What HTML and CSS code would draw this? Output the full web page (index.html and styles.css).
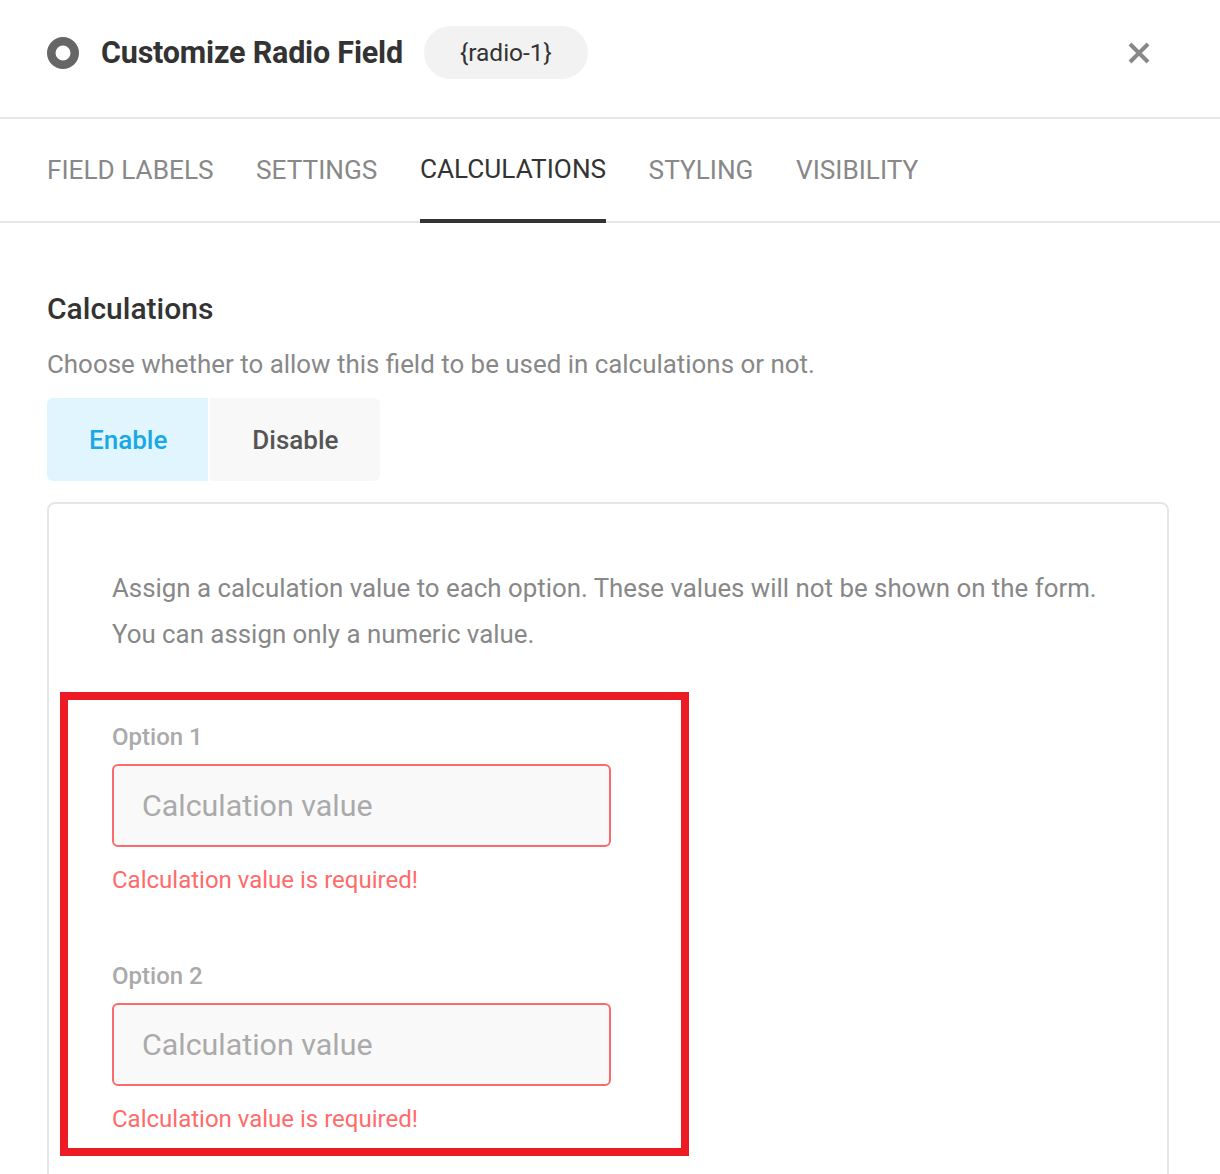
FILE: index.html
```html
<!DOCTYPE html>
<html lang="en">
<head>
<meta charset="utf-8">
<title>Customize Radio Field</title>
<link rel="stylesheet" href="styles.css">
</head>
<body>
<div class="modal">
  <header class="header">
    <svg class="radio-icon" width="32" height="32" viewBox="0 0 32 32" aria-hidden="true">
      <circle cx="16" cy="16" r="11.75" fill="none" stroke="#666" stroke-width="8.5"/>
    </svg>
    <h1 class="title">Customize Radio Field</h1>
    <span class="pill">{radio-1}</span>
    <button class="close" aria-label="Close">
      <svg width="24" height="24" viewBox="0 0 24 24" aria-hidden="true">
        <path d="M3 3 L21 21 M21 3 L3 21" stroke="#888" stroke-width="4" stroke-linecap="butt" fill="none"/>
      </svg>
    </button>
  </header>

  <nav class="tabs">
    <span class="tab">Field Labels</span>
    <span class="tab">Settings</span>
    <span class="tab active">Calculations</span>
    <span class="tab">Styling</span>
    <span class="tab">Visibility</span>
  </nav>

  <main class="content">
    <h2 class="section-title">Calculations</h2>
    <p class="section-desc">Choose whether to allow this field to be used in calculations or not.</p>
    <div class="toggle">
      <span class="toggle-btn on">Enable</span>
      <span class="toggle-btn off">Disable</span>
    </div>

    <div class="box">
      <p class="box-text">Assign a calculation value to each option. These values will not be shown on the form.<br>You can assign only a numeric value.</p>

      <div class="options">
        <div class="option">
          <label class="opt-label">Option 1</label>
          <input class="opt-input" type="text" placeholder="Calculation value">
          <div class="opt-error">Calculation value is required!</div>
        </div>
        <div class="option">
          <label class="opt-label">Option 2</label>
          <input class="opt-input" type="text" placeholder="Calculation value">
          <div class="opt-error">Calculation value is required!</div>
        </div>
      </div>
    </div>
  </main>
</div>
</body>
</html>
```

FILE: styles.css
```css
* { box-sizing: border-box; }

html, body {
  margin: 0;
  padding: 0;
  background: #fff;
}

body {
  font-family: Roboto, "Liberation Sans", Arial, sans-serif;
  color: #333;
  width: 1220px;
  height: 1174px;
  overflow: hidden;
}

.header {
  display: flex;
  align-items: center;
  height: 119px;
  padding: 0 69px 12px 47px;
  border-bottom: 2px solid #e6e6e6;
}

.radio-icon {
  flex: none;
  display: block;
}

.title {
  margin: 0 0 0 22px;
  font-size: 30.5px;
  font-weight: 700;
  color: #333;
  letter-spacing: -0.2px;
}

.pill {
  margin-left: 21px;
  height: 53px;
  line-height: 53px;
  padding: 0 36px;
  border-radius: 27px;
  background: #f2f2f2;
  font-size: 24.5px;
  color: #333;
}

.close {
  margin-left: auto;
  border: 0;
  background: none;
  padding: 0;
  display: flex;
}

.tabs {
  display: flex;
  gap: 42.5px;
  height: 104px;
  padding: 0 47px;
  border-bottom: 2px solid #e6e6e6;
}

.tab {
  display: flex;
  align-items: center;
  font-size: 26.2px;
  color: #888;
  text-transform: uppercase;
}

.tab.active {
  color: #333;
  border-bottom: 4px solid #333;
  margin-bottom: -2px;
}

.content {
  padding: 0 51px 0 47px;
}

.section-title {
  margin: 68px 0 0;
  font-size: 30px;
  line-height: 36px;
  font-weight: 500;
  color: #333;
}

.section-desc {
  margin: 19px 0 0;
  font-size: 25.9px;
  line-height: 36px;
  color: #888;
}

.toggle {
  display: flex;
  gap: 2px;
  margin-top: 16px;
}

.toggle-btn {
  height: 83px;
  display: flex;
  align-items: center;
  font-size: 26px;
  font-weight: 500;
}

.toggle-btn.on {
  padding: 0 41px 0 42px;
  background: #e1f5fe;
  color: #17a8e5;
  border-radius: 6px 0 0 6px;
}

.toggle-btn.off {
  padding: 0 41px 0 42px;
  background: #f8f8f8;
  color: #555;
  border-radius: 0 6px 6px 0;
}

.box {
  margin-top: 21px;
  border: 2px solid #e6e6e6;
  border-radius: 8px;
  padding: 61px 63px 60px;
}

.box-text {
  margin: 0;
  font-size: 25.85px;
  line-height: 46px;
  color: #888;
}

.options {
  margin: 35px 0 0 -52px;
  width: 629px;
  border: 8px solid #ed1c24;
  padding: 22px 0 14px 44px;
}

.option + .option {
  margin-top: 66px;
}

.opt-label {
  display: block;
  font-size: 24px;
  line-height: 30px;
  font-weight: 500;
  color: #aaa;
}

.opt-input {
  display: block;
  margin-top: 12px;
  width: 499px;
  height: 83px;
  border: 2px solid #fb6b6b;
  border-radius: 6px;
  background: #f9f9f9;
  padding: 0 28px;
  font-family: inherit;
  font-size: 30.4px;
  color: #333;
  outline: none;
}

.opt-input::placeholder {
  color: #aaa;
}

.opt-error {
  margin-top: 18px;
  font-size: 24px;
  line-height: 30px;
  color: #ff6b6b;
}
```
